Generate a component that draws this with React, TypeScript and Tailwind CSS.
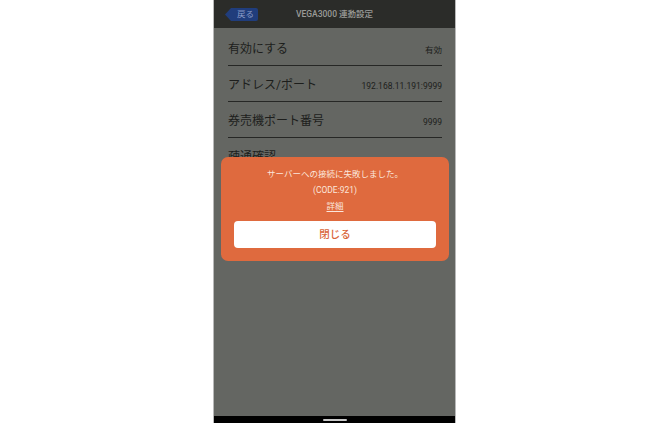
import React from "react";

const font = { fontFamily: "Roboto, 'Noto Sans CJK JP', sans-serif" };

const rows = [
  { label: "有効にする", value: "有効" },
  { label: "アドレス/ポート", value: "192.168.11.191:9999" },
  { label: "券売機ポート番号", value: "9999" },
  { label: "疎通確認", value: "" },
];

function BackButton() {
  return (
    <div className="flex items-center h-[13px]">
      <svg width="6" height="13" viewBox="0 0 6 13" className="block">
        <path d="M6 0 L6 13 L0 6.5 Z" fill="#203d7c" />
      </svg>
      <div className="h-[13px] bg-[#203d7c] rounded-r-[2px] pl-[6px] pr-[4px] flex items-center text-[8.5px] leading-none text-[#8a9bc6]">
        戻る
      </div>
    </div>
  );
}

export default function App() {
  return (
    <div className="w-full h-[423px] bg-white flex pl-[213px]" style={font}>
      <div className="relative w-[243px] h-full border-x border-[#b9b9b9] flex flex-col">
        <header className="h-[28px] bg-[#2b2c29] grid grid-cols-[1fr_auto_1fr] items-center">
          <div className="pl-[11px]">
            <BackButton />
          </div>
          <div className="text-[8.5px] font-medium text-[#9a9b98]">VEGA3000 連動設定</div>
          <div />
        </header>

        <main className="flex-1 bg-[#646662] pt-[2px] pl-[14px] pr-[13px]">
          {rows.map((r) => (
            <div
              key={r.label}
              className="h-[36px] border-b border-[#262725] flex items-center justify-between pt-[2px]"
            >
              <span className="text-[12px] text-[#1d1e1c] leading-none">{r.label}</span>
              <span className="text-[8.5px] text-[#1d1e1c] leading-none pt-[3px]">{r.value}</span>
            </div>
          ))}
        </main>

        <footer className="h-[7px] bg-black flex justify-center pt-[3px]">
          <div className="w-[24px] h-[1.5px] bg-[#c9c9c9] rounded-full" />
        </footer>

        <div className="absolute left-[7px] right-[6px] top-[157px] h-[104px] bg-[#df6a3e] rounded-[7px] flex flex-col items-center pt-[12px] px-[13px]">
          <p className="text-[8.5px] leading-[11px] text-[#fbe6dc]">サーバーへの接続に失敗しました。</p>
          <p className="text-[8.5px] leading-[11px] text-[#fbe6dc] mt-[5px]">(CODE:921)</p>
          <p className="text-[8.5px] leading-[11px] text-[#fbe6dc] mt-[5px] underline underline-offset-2">詳細</p>
          <button className="mt-[9px] w-full h-[27px] bg-white rounded-[4px] text-[10.5px] font-medium text-[#d9653a] flex items-center justify-center">
            閉じる
          </button>
        </div>
      </div>
    </div>
  );
}
